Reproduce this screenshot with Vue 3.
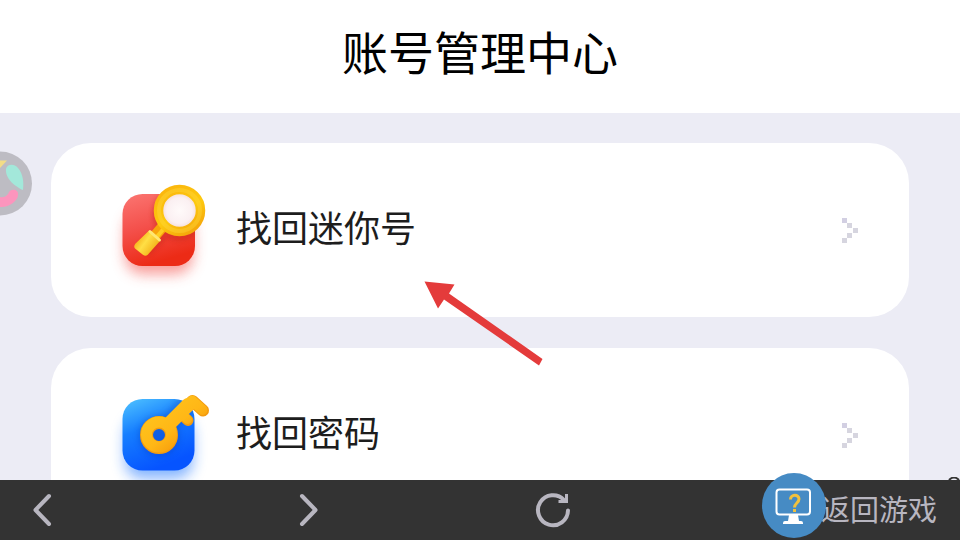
<script setup>
const entries = [
  { id: 'account', label: '找回迷你号' },
  { id: 'password', label: '找回密码' }
]
const pixels = [[0, 0], [5, 5], [11, 10], [5, 15], [0, 20]]
</script>

<template>
  <div class="screen">
    <header class="header">
      <h1>账号管理中心</h1>
    </header>

    <main class="content">
      <a v-for="entry in entries" :key="entry.id" class="card" :href="'#' + entry.id">
        <svg v-if="entry.id === 'account'" class="icon" viewBox="0 0 110 108" aria-hidden="true">
          <defs>
            <linearGradient id="red" x1="0" y1="0" x2="0.3" y2="1">
              <stop offset="0" stop-color="#fb7672" />
              <stop offset="0.5" stop-color="#f4504b" />
              <stop offset="1" stop-color="#ec2b16" />
            </linearGradient>
            <linearGradient id="rim" x1="0.2" y1="0" x2="0.8" y2="1">
              <stop offset="0" stop-color="#fbb70d" />
              <stop offset="0.55" stop-color="#fdc90f" />
              <stop offset="1" stop-color="#f5a80b" />
            </linearGradient>
            <linearGradient id="grip" x1="0" y1="0.2" x2="1" y2="0.9">
              <stop offset="0" stop-color="#f2a20b" />
              <stop offset="0.4" stop-color="#ffdf45" />
              <stop offset="1" stop-color="#eda006" />
            </linearGradient>
            <radialGradient id="glass">
              <stop offset="0" stop-color="#fffafa" />
              <stop offset="0.75" stop-color="#fbf0f2" />
              <stop offset="1" stop-color="#f6dfd9" />
            </radialGradient>
            <filter id="soft" x="-40%" y="-40%" width="180%" height="180%">
              <feGaussianBlur stdDeviation="7" />
            </filter>
            <filter id="shade" x="-40%" y="-40%" width="180%" height="180%">
              <feGaussianBlur stdDeviation="2" />
            </filter>
            <clipPath id="redTile"><rect x="14.5" y="18" width="72.5" height="72" rx="20" /></clipPath>
          </defs>
          <rect x="17" y="36" width="68" height="62" rx="18" fill="#f34b45" opacity="0.55" filter="url(#soft)" />
          <rect x="14.5" y="18" width="72.5" height="72" rx="20" fill="url(#red)" />
          <g clip-path="url(#redTile)" opacity="0.4">
            <circle cx="71" cy="38" r="27" fill="#c22512" filter="url(#shade)" />
            <path d="M55 56L36 74" stroke="#c22512" stroke-width="15" filter="url(#shade)" />
          </g>
          <path d="M57 48L45 62" stroke="#f7a50b" stroke-width="11" />
          <path d="M58 50L47 63" stroke="#ffce22" stroke-width="4" />
          <path d="M41 56L51 64.500L39 78Q37.500 79.500 35.500 78L28 72Q26.500 70.500 28 68.500Z" fill="url(#grip)" stroke="url(#grip)" stroke-width="2" stroke-linejoin="round" />
          <path d="M42 55.500L51.500 64" stroke="#ffe873" stroke-width="3" stroke-linecap="round" />
          <circle cx="71.500" cy="34.500" r="17" fill="url(#glass)" />
          <circle cx="71.500" cy="34.500" r="21" fill="none" stroke="url(#rim)" stroke-width="9.500" />
          <circle cx="71.500" cy="34.500" r="20.500" fill="none" stroke="#ffdc45" stroke-width="4" opacity="0.35" />
        </svg>

        <svg v-else class="icon" viewBox="0 0 110 108" aria-hidden="true">
          <defs>
            <linearGradient id="blue" x1="0" y1="0" x2="0.4" y2="1">
              <stop offset="0" stop-color="#50c4ff" />
              <stop offset="0.45" stop-color="#167eff" />
              <stop offset="1" stop-color="#0654ff" />
            </linearGradient>
            <linearGradient id="gold" gradientUnits="userSpaceOnUse" x1="42" y1="30" x2="72" y2="66">
              <stop offset="0" stop-color="#ffc31c" />
              <stop offset="0.6" stop-color="#ffb716" />
              <stop offset="1" stop-color="#f79d0d" />
            </linearGradient>
            <filter id="blueSoft" x="-40%" y="-40%" width="180%" height="180%">
              <feGaussianBlur stdDeviation="7" />
            </filter>
            <filter id="keyShade" x="-40%" y="-40%" width="180%" height="180%">
              <feGaussianBlur stdDeviation="3" />
            </filter>
            <clipPath id="blueTile"><rect x="14.5" y="18" width="72" height="71.500" rx="20" /></clipPath>
          </defs>
          <rect x="17" y="36" width="68" height="62" rx="18" fill="#2478ff" opacity="0.55" filter="url(#blueSoft)" />
          <rect x="14.5" y="18" width="72" height="71.500" rx="20" fill="url(#blue)" />
          <g clip-path="url(#blueTile)" opacity="0.35">
            <path d="M58 46L84 18" stroke="#083bb0" stroke-width="18" filter="url(#keyShade)" />
            <circle cx="51" cy="55" r="20" fill="#083bb0" filter="url(#keyShade)" />
          </g>
          <g fill="none" stroke-linecap="round" stroke-linejoin="round">
            <g stroke="#f39b0e">
              <circle cx="51" cy="54" r="12.500" stroke-width="13" />
              <path d="M62 43L84.500 20L95 29.500" stroke-width="12" />
              <path d="M72 32L80 39.500" stroke-width="11" />
            </g>
            <g stroke="url(#gold)">
              <circle cx="51" cy="53.500" r="12.500" stroke-width="11" />
              <path d="M61 42.500L84 19.500L94.500 29" stroke-width="10" />
              <path d="M72 32L79.500 38.500" stroke-width="9" />
            </g>
            <path d="M63 41L80 24" stroke="url(#gold)" stroke-width="14" />
          </g>
        </svg>

        <span class="label">{{ entry.label }}</span>
        <svg class="more" viewBox="0 0 16 25" aria-hidden="true">
          <rect v-for="(p, i) in pixels" :key="i" :x="p[0]" :y="p[1]" width="5" height="5" :fill="i === 0 ? '#d2cfe2' : '#d6d5df'" />
        </svg>
      </a>
    </main>

    <nav class="toolbar" aria-label="导航">
      <button type="button" aria-label="后退">
        <svg width="20" height="36" viewBox="0 0 20 36"><path d="M16 4L2.500 18L16 32" /></svg>
      </button>
      <button type="button" aria-label="前进">
        <svg width="20" height="36" viewBox="0 0 20 36"><path d="M3 4L16.500 18L3 32" /></svg>
      </button>
      <button type="button" aria-label="刷新">
        <svg width="36" height="36" viewBox="0 0 36 36">
          <path d="M33 18.500A15 15 0 1 1 29 8" />
          <path d="M31.500 2V9.500H23.500" stroke-width="3" stroke-linecap="butt" stroke-linejoin="miter" />
        </svg>
      </button>
      <button type="button" class="return">返回游戏</button>
    </nav>

    <svg class="ball" viewBox="0 0 32 65" aria-hidden="true">
      <circle cx="0" cy="32.500" r="32" fill="#bdbcc3" />
      <path d="M0 9.500H7L0 17Z" fill="#f3dc86" />
      <path d="M6 18C7 13 14 12 18 17C23 23 24 31 23 39C16 36 5 28 6 18Z" fill="#a3e8da" />
      <path d="M0 46C5 47 8 44 9 41C12 37 19 39 18 44C18 50 8 57 0 56Z" fill="#fc95bd" />
    </svg>

    <svg class="pointer" viewBox="0 0 120 86" aria-hidden="true">
      <path d="M0.500 0.500L30.500 3.500L25 12.500L118.500 78L115 84.500L20 18.500L14 27.500Z" fill="#e43b3b" />
    </svg>

    <svg class="corner" viewBox="0 0 12 3" aria-hidden="true">
      <path d="M1 3Q6 -2 11 3" fill="none" stroke="#333" stroke-width="2" />
    </svg>

    <div class="badge">
      <svg viewBox="0 0 64 64" aria-hidden="true">
        <rect x="14.500" y="16.500" width="33.500" height="25" rx="3" fill="none" stroke="#fff" stroke-width="2" />
        <path d="M27 42H36L37 48H39Q41 48 41 50V51H21V50Q21 48 23 48H26Z" fill="#fff" />
        <path d="M28.500 26.500C28.500 21 37 21 37 26C37 30 32.500 30 32.500 34.500" fill="none" stroke="#f1c13d" stroke-width="3" />
        <rect x="31" y="36" width="3" height="3" fill="#f1c13d" />
      </svg>
    </div>
  </div>
</template>

<style>
body { background: #ececf5; }
</style>

<style scoped>
.screen {
  position: relative;
  display: flex;
  flex-direction: column;
  height: 100vh;
  overflow: hidden;
  background: #ececf5;
  font-family: "Noto Sans CJK SC", sans-serif;
}
.header {
  flex: none;
  padding: 16px 0 29px;
  background: #fff;
  text-align: center;
}
h1 {
  margin: 0;
  color: #000;
  font-size: 46px;
  font-weight: 400;
  line-height: 68px;
}
.content {
  flex: 1;
  min-height: 0;
  display: flex;
  flex-direction: column;
  gap: 31px;
  padding: 30px 51px 0;
  overflow: hidden;
}
.card {
  flex: none;
  display: flex;
  align-items: center;
  gap: 18px;
  padding: 33px 51px 33px 57px;
  border-radius: 40px;
  background: #fff;
  color: #1d1d1d;
  text-decoration: none;
}
.icon { width: 110px; height: 108px; flex: none; overflow: visible; }
.label { flex: 1; padding-bottom: 8px; font-size: 36px; line-height: 52px; }
.more { width: 16px; height: 25px; flex: none; shape-rendering: crispEdges; }
.toolbar {
  flex: none;
  display: grid;
  grid-template-columns: 266fr 236fr 286fr 116px;
  align-items: center;
  justify-items: start;
  height: 60px;
  padding: 0 23px 0 33px;
  background: #333;
}
.toolbar button {
  display: block;
  padding: 0;
  border: 0;
  background: none;
  color: #b8b6c0;
  font: inherit;
}
.toolbar svg {
  display: block;
  fill: none;
  stroke: currentColor;
  stroke-width: 4;
  stroke-linecap: round;
  stroke-linejoin: round;
}
.toolbar .return { padding-bottom: 4px; font-size: 29px; line-height: 56px; white-space: nowrap; }
.ball { position: absolute; left: 0; top: 151px; width: 32px; height: 65px; }
.pointer { position: absolute; left: 424px; top: 281px; width: 120px; height: 86px; }
.corner { position: absolute; right: 0; bottom: 60px; width: 12px; height: 3px; }
.badge {
  position: absolute;
  right: 134px;
  bottom: 2px;
  width: 64px;
  height: 65px;
  border-radius: 50%;
  background: #468bc4;
}
.badge svg { display: block; width: 64px; height: 64px; }
</style>
